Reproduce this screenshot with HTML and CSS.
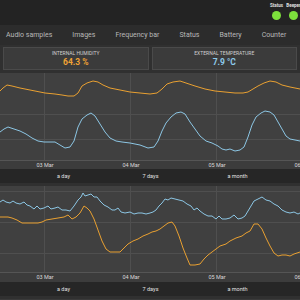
FILE: index.html
```html
<!DOCTYPE html>
<html lang="en">
<head>
    <meta charset="UTF-8">
    <meta name="viewport" content="width=device-width, initial-scale=1.0">
    <title>Sensor Dashboard</title>
    <link rel="stylesheet" href="styles.css">
</head>
<body>
    <div class="topbar">
        <div class="indicator"><span class="indicator-label">Status</span><span class="dot"></span></div>
        <div class="indicator"><span class="indicator-label">Beeper</span><span class="dot"></span></div>
    </div>

    <nav class="tabs">
        <span class="tab">Audio samples</span>
        <span class="tab">Images</span>
        <span class="tab">Frequency bar</span>
        <span class="tab">Status</span>
        <span class="tab">Battery</span>
        <span class="tab">Counter</span>
    </nav>

    <div class="cards">
        <div class="card">
            <p class="card-label">Internal humidity</p>
            <p class="card-value humidity">64.3 %</p>
        </div>
        <div class="card">
            <p class="card-label">External temperature</p>
            <p class="card-value temperature">7.9 °C</p>
        </div>
    </div>

    <div class="chart">
        <svg class="plot" width="300" height="96" viewBox="0 0 300 96">
            <rect x="0" y="0" width="300" height="87" fill="#404040"/>
            <g class="grid">
                <line x1="0" y1="41.5" x2="300" y2="41.5"/>
                <line x1="0" y1="66.5" x2="300" y2="66.5"/>
                <line x1="44.5" y1="0" x2="44.5" y2="87"/>
                <line x1="130.5" y1="0" x2="130.5" y2="87"/>
                <line x1="216.5" y1="0" x2="216.5" y2="87"/>
            </g>
            <line class="axis" x1="0" y1="87.5" x2="300" y2="87.5"/>
            <polyline class="line orange" points="0,18 3,15 7,12 12,13 20,15 30,17 40,19 45,20 55,21 62,22 68,23 74,23 78,20 82,13 87,10 93,8 98,9 103,12 110,15 120,17 130,19 140,20 150,21 157,20 162,16 167,11 173,9 180,8 186,10 195,13 205,16 215,18 225,19 235,20 243,20 248,19 253,16 258,13 264,10 270,8 276,9 282,12 290,14 300,16"/>
            <polyline class="line blue" points="0,59 4,56 8,54 14,56 20,58 26,61 32,65 38,68 44,69 50,69 55,69 60,72 65,75 70,74 74,68 78,54 82,46 87,42 91,40 95,43 100,51 105,59 110,65 116,68 122,69 130,70 140,72 148,75 154,74 158,68 162,58 166,50 171,44 176,40 181,39 185,41 190,49 195,56 200,63 206,68 212,70 218,73 222,76 226,77 230,76 235,78 240,77 244,74 248,64 252,52 256,44 261,40 265,38 270,39 274,42 278,49 282,56 286,63 290,66 295,67 300,68"/>
            <g class="ticks">
                <text x="45" y="94">03 Mar</text>
                <text x="131" y="94">04 Mar</text>
                <text x="217" y="94">05 Mar</text>
                <text x="303" y="94">06 Mar</text>
            </g>
        </svg>
        <div class="ranges">
            <span class="range">a day</span>
            <span class="range">7 days</span>
            <span class="range">a month</span>
        </div>
    </div>

    <div class="chart">
        <svg class="plot" width="300" height="96" viewBox="0 0 300 96">
            <rect x="0" y="0" width="300" height="86" fill="#404040"/>
            <g class="grid">
                <line x1="0" y1="5.5" x2="300" y2="5.5"/>
                <line x1="0" y1="36.5" x2="300" y2="36.5"/>
                <line x1="0" y1="67.5" x2="300" y2="67.5"/>
                <line x1="44.5" y1="0" x2="44.5" y2="86"/>
                <line x1="130.5" y1="0" x2="130.5" y2="86"/>
                <line x1="216.5" y1="0" x2="216.5" y2="86"/>
            </g>
            <line class="axis" x1="0" y1="86.5" x2="300" y2="86.5"/>
            <polyline class="line blue" points="0,16 3,14 6,16 10,17 13,15 16,17 20,18 24,16 27,19 30,20 34,23 37,20 40,23 44,22 48,20 51,23 55,22 58,21 62,24 66,24 70,25 74,20 78,14 81,11 83,7 85,10 88,9 91,8 94,11 97,11 100,15 104,19 108,21 112,24 115,24 118,22 121,26 125,27 130,26 134,28 138,27 142,27 146,28 150,27 153,26 156,24 159,20 162,17 165,13 168,14 171,12 175,13 179,14 183,15 187,18 191,20 194,24 197,22 200,25 204,28 208,30 212,30 216,33 219,30 222,33 226,33 230,32 234,29 238,33 242,32 245,30 248,25 251,20 254,15 258,13 262,11 266,14 270,15 274,18 278,20 282,24 286,26 290,27 294,26 298,28 300,27"/>
            <polyline class="line orange" points="0,31 8,31 12,32 17,34 22,37 30,37 38,37 42,36 46,34 52,33 58,32 64,31 68,29 72,33 76,31 80,27 84,20 87,22 90,25 94,33 98,44 102,55 106,63 110,66 115,66 120,66 124,62 128,58 133,55 138,53 143,50 148,48 152,46 156,45 160,43 164,40 168,37 172,36 175,40 179,50 183,62 187,72 190,79 195,79 200,78 204,73 208,69 212,66 216,63 220,60 226,58 230,55 236,52 242,50 246,47 250,45 254,38 258,38 262,43 266,52 270,60 274,67 278,70 282,69 286,69 290,70 294,68 300,66"/>
            <g class="ticks">
                <text x="45" y="93">03 Mar</text>
                <text x="131" y="93">04 Mar</text>
                <text x="217" y="93">05 Mar</text>
                <text x="303" y="93">06 Mar</text>
            </g>
        </svg>
        <div class="ranges">
            <span class="range">a day</span>
            <span class="range">7 days</span>
            <span class="range">a month</span>
        </div>
    </div>

    <div class="footer"></div>
</body>
</html>
```

FILE: styles.css
```css
body { font-family: 'Roboto', 'Liberation Sans', sans-serif; background-color: #303030; margin: 0; padding: 0; width: 300px; height: 300px; overflow: hidden; }
p { margin: 0; }
.topbar { display: flex; height: 25px; background-color: #232323; padding-left: 268px; }
.indicator { display: flex; flex-direction: column; align-items: center; width: 17px; flex-shrink: 0; padding-top: 3px; }
.indicator-label { font-size: 4.5px; font-weight: bold; color: #e0e0e0; line-height: 6px; white-space: nowrap; }
.dot { width: 9px; height: 9px; border-radius: 50%; background-color: #7de03c; margin-top: 2px; }
.tabs { display: flex; gap: 20px; height: 20px; align-items: center; background-color: #2c2c2c; padding-left: 6px; white-space: nowrap; }
.tab { font-size: 7px; color: #b8b8b8; }
.cards { display: flex; gap: 3px; padding: 2px 3px 3px; }
.card { flex: 1; height: 20px; background-color: #3b3b3b; border: 1px solid #4a4a4a; text-align: center; padding-top: 1px; }
.card-label { font-size: 5px; color: #cfcfcf; text-transform: uppercase; line-height: 8px; }
.card-value { font-size: 8.5px; font-weight: bold; line-height: 10px; }
.humidity { color: #f0a235; }
.temperature { color: #8ecbeb; }
.chart { display: flex; flex-direction: column; margin-bottom: 3px; }
.plot { display: block; background-color: #3c3c3c; }
.grid line { stroke: #4f4f4f; stroke-width: 1; }
.axis { stroke: #555; stroke-width: 1; }
.line { fill: none; stroke-width: 1; stroke-linejoin: round; }
.orange { stroke: #e9a031; }
.blue { stroke: #8cc6e4; }
.ticks text { font-size: 5.5px; fill: #d8d8d8; text-anchor: middle; font-family: 'Roboto', 'Liberation Sans', sans-serif; }
.ranges { display: flex; height: 14px; align-items: center; background-color: #262626; padding-left: 20px; }
.range { width: 87px; text-align: center; font-size: 5.5px; color: #e0e0e0; }
.footer { height: 10px; background-color: #3a3a3a; }
```
